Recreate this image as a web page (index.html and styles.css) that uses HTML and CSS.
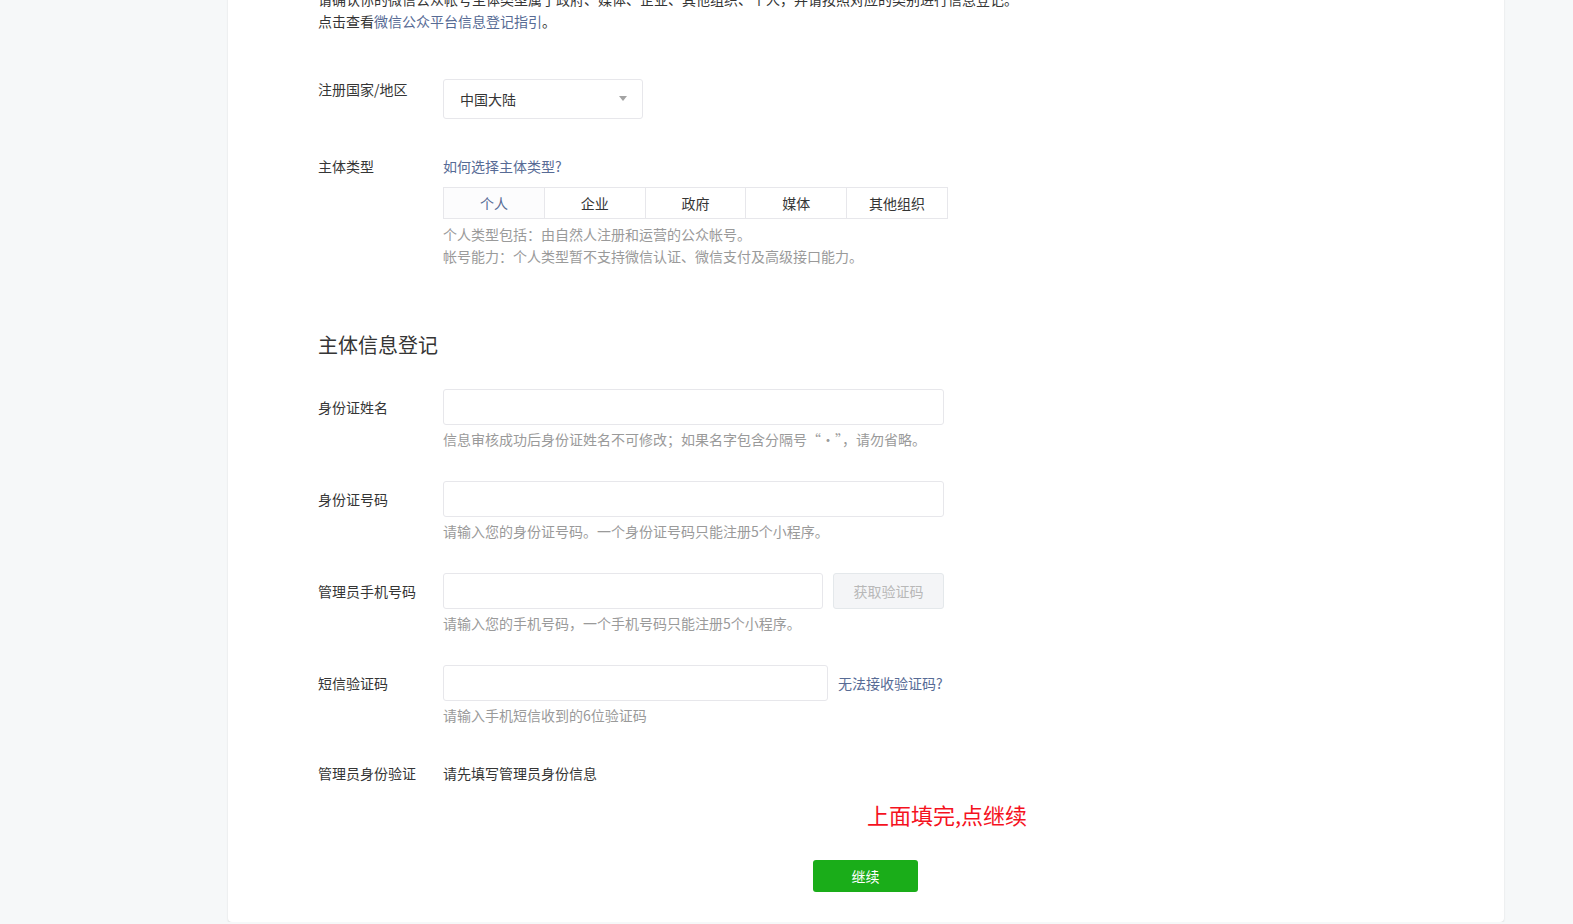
FILE: index.html
```html
<!DOCTYPE html>
<html lang="zh-CN">
<head>
<meta charset="utf-8">
<title>信息登记</title>
<link rel="stylesheet" href="styles.css">
</head>
<body>
<div class="card">
  <div class="intro">
    <p>请确认你的微信公众帐号主体类型属于政府、媒体、企业、其他组织、个人，并请按照对应的类别进行信息登记。</p>
    <p>点击查看<a class="link" href="#">微信公众平台信息登记指引</a>。</p>
  </div>

  <div class="row row-country">
    <div class="label label-top">注册国家/地区</div>
    <div class="field">
      <div class="select">
        <span>中国大陆</span>
        <span class="arrow"></span>
      </div>
    </div>
  </div>

  <div class="row row-type">
    <div class="label label-top">主体类型</div>
    <div class="field">
      <a class="link" href="#">如何选择主体类型?</a>
      <div class="tabs">
        <div class="tab selected">个人</div>
        <div class="tab">企业</div>
        <div class="tab">政府</div>
        <div class="tab">媒体</div>
        <div class="tab">其他组织</div>
      </div>
      <p class="hint hint-type">个人类型包括：由自然人注册和运营的公众帐号。</p>
      <p class="hint">帐号能力：个人类型暂不支持微信认证、微信支付及高级接口能力。</p>
    </div>
  </div>

  <h2 class="section-title">主体信息登记</h2>

  <div class="row row-first">
    <div class="label">身份证姓名</div>
    <div class="field">
      <div class="input input-full"></div>
      <p class="hint hint-input">信息审核成功后身份证姓名不可修改；如果名字包含分隔号“·”，请勿省略。</p>
    </div>
  </div>

  <div class="row row-next">
    <div class="label">身份证号码</div>
    <div class="field">
      <div class="input input-full"></div>
      <p class="hint hint-input">请输入您的身份证号码。一个身份证号码只能注册5个小程序。</p>
    </div>
  </div>

  <div class="row row-next">
    <div class="label">管理员手机号码</div>
    <div class="field">
      <div class="inline">
        <div class="input input-phone"></div>
        <div class="btn-code">获取验证码</div>
      </div>
      <p class="hint hint-input">请输入您的手机号码，一个手机号码只能注册5个小程序。</p>
    </div>
  </div>

  <div class="row row-next">
    <div class="label">短信验证码</div>
    <div class="field">
      <div class="inline">
        <div class="input input-sms"></div>
        <a class="link sms-link" href="#">无法接收验证码?</a>
      </div>
      <p class="hint hint-input">请输入手机短信收到的6位验证码</p>
    </div>
  </div>

  <div class="row row-admin">
    <div class="label label-top">管理员身份验证</div>
    <div class="field admin-text">请先填写管理员身份信息</div>
  </div>

  <div class="note">上面填完,点继续</div>

  <div class="actions">
    <a class="btn-primary" href="#">继续</a>
  </div>
</div>
</body>
</html>
```

FILE: styles.css
```css
html, body {
  margin: 0;
  padding: 0;
  background: #f6f8f9;
}

body {
  font-family: "Noto Sans CJK SC", "Microsoft YaHei", sans-serif;
  font-size: 14px;
  color: #353535;
  overflow: hidden;
}

p { margin: 0; }

a { text-decoration: none; }

.card {
  margin-top: -40px;
  margin-left: 228px;
  width: 1276px;
  box-sizing: border-box;
  padding: 28px 0 30px 90px;
  background: #fff;
  border-radius: 4px;
  box-shadow: 0 1px 2px rgba(0, 0, 0, 0.12);
}

.intro p {
  line-height: 22px;
}

.link {
  color: #576b95;
}

.row {
  display: flex;
  align-items: flex-start;
}

.label {
  width: 125px;
  flex: none;
  line-height: 36px;
}

.label-top {
  line-height: 22px;
}

.field {
  display: flex;
  flex-direction: column;
  align-items: flex-start;
}

.row-country {
  margin-top: 47px;
}

.row-country .label {
  margin-top: -1px;
}

.select {
  width: 200px;
  height: 40px;
  box-sizing: border-box;
  border: 1px solid #e7e7eb;
  border-radius: 3px;
  padding: 0 15px 0 16px;
  display: flex;
  align-items: center;
  justify-content: space-between;
  line-height: 38px;
}

.arrow {
  width: 0;
  height: 0;
  border-left: 4px solid transparent;
  border-right: 4px solid transparent;
  border-top: 5px solid #a3a3a3;
  margin-top: -2px;
}

.row-type {
  margin-top: 36px;
}

.row-type .link {
  line-height: 22px;
}

.tabs {
  margin-top: 10px;
  display: flex;
  width: 505px;
  border: 1px solid #e7e7eb;
  box-sizing: border-box;
}

.tab {
  flex: 1;
  height: 30px;
  line-height: 30px;
  text-align: center;
  border-left: 1px solid #e7e7eb;
}

.tab:first-child {
  border-left: none;
}

.tab.selected {
  color: #576b95;
  background: #fcfcfd;
}

.hint {
  color: #9a9a9a;
  line-height: 22px;
}

.hint-type {
  margin-top: 4px;
}

.section-title {
  margin: 64px 0 0;
  font-size: 20px;
  font-weight: normal;
  line-height: 28px;
  color: #353535;
}

.row-first {
  margin-top: 30px;
}

.row-next {
  margin-top: 31px;
}

.input {
  height: 36px;
  box-sizing: border-box;
  border: 1px solid #e7e7eb;
  border-radius: 3px;
  background: #fff;
}

.input-full { width: 501px; }
.input-phone { width: 380px; }
.input-sms { width: 385px; }

.hint-input {
  margin-top: 3px;
}

.inline {
  display: flex;
  align-items: center;
}

.btn-code {
  margin-left: 10px;
  width: 111px;
  height: 36px;
  box-sizing: border-box;
  border: 1px solid #e4e8eb;
  border-radius: 3px;
  background: #f4f5f7;
  color: #b8b8b8;
  text-align: center;
  line-height: 34px;
}

.sms-link {
  margin-left: 10px;
  line-height: 36px;
}

.row-admin {
  margin-top: 36px;
}

.admin-text {
  line-height: 22px;
}

.note {
  margin-top: 15px;
  margin-left: 549px;
  font-size: 22px;
  line-height: 30px;
  color: #f5121e;
}

.actions {
  margin-top: 31px;
  margin-left: 495px;
}

.btn-primary {
  display: block;
  width: 105px;
  height: 32px;
  line-height: 32px;
  text-align: center;
  background: #1aad19;
  color: #fff;
  border-radius: 3px;
}
```
